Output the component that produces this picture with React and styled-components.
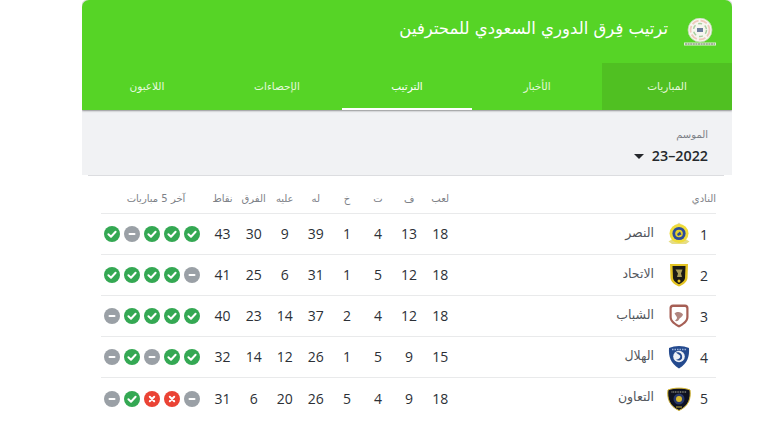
import React from "react";
import styled, { createGlobalStyle } from "styled-components";

const Global = createGlobalStyle`
  html, body { margin: 0; padding: 0; background: #fff; height: 427px; overflow: hidden; }
  body { font-family: "Open Sans", "DejaVu Sans", sans-serif; }
`;
const Page = styled.div`
  width: 650px; margin-left: 82px; height: 427px; overflow: hidden;
`;
const Card = styled.div`
  direction: rtl; height: 440px; box-sizing: border-box;
  border-radius: 7px 7px 0 0; box-shadow: 0 0 0 1px #e2e3e5; background: #fff;
`;
const Green = styled.header`
  background: #56d426; border-radius: 7px 7px 0 0; box-shadow: 0 1px 2px rgba(0,0,0,.4); position: relative;
`;
const TitleBar = styled.div`
  height: 63px; display: flex; align-items: center; gap: 16px; padding-right: 16px; box-sizing: border-box;
`;
const Title = styled.h1`
  margin: 0; font-size: 16.5px; font-weight: 400; color: #fff; line-height: 1;
  font-family: "DejaVu Sans", sans-serif; letter-spacing: -0.82px; position: relative; top: -2px;
`;
const Tabs = styled.nav`display: flex;`;
const Tab = styled.div`
  width: 130px; height: 47px; display: flex; align-items: center; justify-content: center; box-sizing: border-box;
  padding-top: 1px; font-size: 10.5px; letter-spacing: -0.4px; font-family: "DejaVu Sans", sans-serif;
  color: ${p => (p.$active ? "#fff" : "#e6f9de")};
  background: ${p => (p.$selected ? "#50c022" : "transparent")};
  border-bottom: 2px solid ${p => (p.$active ? "#fff" : "transparent")};
`;
const Season = styled.section`
  background: #f1f2f4; height: 65px; padding: 18px 24px 0 0; box-sizing: border-box;
`;
const SeasonLabel = styled.div`
  font-family: "DejaVu Sans", sans-serif; font-size: 10px; letter-spacing: -0.35px; color: #7d8187; line-height: 13px;
`;
const SeasonValue = styled.div`
  display: flex; align-items: center; gap: 8px; margin-top: 5px; color: #25282c; font-size: 14.3px; font-weight: 600; line-height: 20px;
`;
const Caret = styled.span`
  width: 0; height: 0; border-left: 5px solid transparent; border-right: 5px solid transparent; border-top: 5px solid #25282c;
`;
const Table = styled.div`
  margin: 0 16px 0 19px; position: relative;
`;
const Rule = styled.div`
  height: 1px; background: #dcdde0; margin: 0 8px 0 6px;
`;
const Row = styled.div`
  display: grid; grid-template-columns: 1fr repeat(8, 31.1px) 106px; align-items: center;
  height: ${p => (p.$head ? 38 : 41)}px; box-sizing: border-box;
  border-bottom: ${p => (p.$last ? "0" : "1px solid #e9eaeb")};
`;
const Head = styled.div`
  font-family: "DejaVu Sans", sans-serif; font-size: 10px; letter-spacing: -0.3px; color: #7d8187; text-align: center; padding-top: 7px;
  white-space: nowrap;
`;
const Num = styled.div`
  font-size: 14px; color: #2c3036; text-align: center; padding-bottom: 1px;
`;
const Team = styled.div`
  display: flex; align-items: center; padding-right: 4px;
`;
const Rank = styled.span`
  width: 16px; text-align: center; font-size: 14px; color: #2c3036;
`;
const LogoBox = styled.span`
  width: 24px; height: 24px; margin-right: 5px; display: flex; align-items: center; justify-content: center;
`;
const Name = styled.span`
  margin-right: 13px; font-family: "DejaVu Sans", sans-serif; font-size: 12.5px; letter-spacing: -0.55px; color: #53575d; position: relative; top: -2px;
`;
const Dots = styled.div`
  display: flex; gap: 4px; padding-right: 7px;
`;
const DotShell = styled.span`
  width: 16px; height: 16px; border-radius: 50%; display: flex; align-items: center; justify-content: center;
  background: ${p => ({ w: "#34a853", d: "#9aa0a6", l: "#ea4335" }[p.$r])};
`;
const Dot = ({ r }) => (
  <DotShell $r={r}>
    <svg width="16" height="16" viewBox="0 0 16 16" fill="none" stroke="#fff" strokeWidth="2" strokeLinecap="round" strokeLinejoin="round">
      {r === "w" && <path d="M4.4 8.3 7 10.7 11.6 5.8" />}
      {r === "d" && <path d="M5.5 8h5" />}
      {r === "l" && <path d="M5.8 5.8l4.4 4.4M10.2 5.8l-4.4 4.4" />}
    </svg>
  </DotShell>
);

const LeagueLogo = () => (
  <svg width="32" height="28" viewBox="0 0 32 28">
    <circle cx="16" cy="12" r="12" fill="#f7f6f0" stroke="#b9d8a8" strokeWidth=".8" />
    <circle cx="16" cy="12" r="9.500" fill="none" stroke="#efc9bc" strokeWidth="1.800" strokeDasharray="7 2" />
    <circle cx="16" cy="12" r="6.500" fill="none" stroke="#a9cfa0" strokeWidth="1.500" strokeDasharray="4 3" />
    <rect x="13" y="10" width="6" height="4" fill="#6c7c9c" />
    <path d="M0 26h32" stroke="#dff0d4" strokeWidth="3" />
    <path d="M1 26h30" stroke="#5b6a55" strokeWidth=".9" strokeDasharray="2 .6" />
  </svg>
);
const logos = {
  nassr: (
    <svg width="24" height="24" viewBox="0 0 24 24">
      <path d="M12 .5l4 3.500H8z" fill="#dfd9a8" />
      <path d="M1.500 19.500l4-2.500h13l4 2.500-3.500 2.500H5z" fill="#e6dd84" />
      <circle cx="12" cy="11.500" r="9.500" fill="#efdc3c" />
      <circle cx="12" cy="11.500" r="6.600" fill="#2b4b9b" />
      <circle cx="12" cy="11.500" r="3.800" fill="#e4cf2c" />
      <path d="M10 12l3-2.500 1.500 3-3.500 1.500z" fill="#2b4b9b" />
    </svg>
  ),
  ittihad: (
    <svg width="20" height="24" viewBox="0 0 20 24">
      <path d="M1 1h18l-.5 14c-.2 4-5.500 7.500-8.500 8.500-3-1-8.300-4.500-8.500-8.500z" fill="#e3c322" />
      <path d="M3.500 3h13l-.5 12c-.2 2.800-3.700 5.200-6 6.200-2.300-1-5.800-3.400-6-6.200z" fill="#1b1a15" />
      <path d="M6.500 6.500h7l-1.500 4 1 3.500H8l1-3.500z" fill="#a99d5a" />
      <circle cx="10" cy="18" r="1.500" fill="#e3c322" />
    </svg>
  ),
  shabab: (
    <svg width="20" height="24" viewBox="0 0 20 24">
      <path d="M4 .5h12c2.200 0 3.500 1.300 3.500 3.500v9c0 5-5.500 8.500-9.500 10.500C6 21.500.5 18 .5 13V4C.5 1.800 1.800.5 4 .5z" fill="#a65f55" />
      <path d="M4.500 3h11c1.200 0 1.800.6 1.800 1.800V13c0 3.800-4.200 6.500-7.300 8-3.100-1.500-7.300-4.200-7.300-8V4.800C2.700 3.600 3.300 3 4.500 3z" fill="#fff" />
      <path d="M5.500 9.500c3-2.500 7-1.500 8.500 1-1 3-3 3-4 5s-3 2-4 1c2-1 2.500-3 1.500-4z" fill="#b08680" />
    </svg>
  ),
  hilal: (
    <svg width="22" height="24" viewBox="0 0 22 24">
      <path d="M1 3c6-2.800 14-2.800 20 0 .6 8-1.500 15.500-10 20.500C2.500 18.500.4 11 1 3z" fill="#244a8e" />
      <circle cx="11" cy="11.500" r="5.800" fill="#eef1f6" />
      <path d="M8 7.500c4-1 7 2 6 6-1 2-4 3-6 1 3 0 5-2 4-4-1-1-3-2-4-3z" fill="#244a8e" />
      <path d="M4 4.500h14" stroke="#9cb3d8" strokeWidth="1.500" strokeDasharray="1.500 1" />
    </svg>
  ),
  taawoun: (
    <svg width="24" height="24" viewBox="0 0 24 24">
      <path d="M1 3c6-2.500 16-2.500 22 0 1 8-1 16-11 20.500C2 19 0 11 1 3z" fill="#0e1120" stroke="#d2b32c" strokeWidth="1" />
      <circle cx="12" cy="12" r="5.500" fill="#28386a" />
      <circle cx="12" cy="12" r="3" fill="#d8b92e" />
      <path d="M4.500 5h15" stroke="#c0c0a8" strokeWidth="1.200" strokeDasharray="1 .7" />
      <path d="M9 20h6" stroke="#c9b23a" strokeWidth="1" />
    </svg>
  ),
};

const teams = [
  { n: "1", name: "النصر", logo: "nassr", s: [18, 13, 4, 1, 39, 9, 30, 43], f: "wwwdw" },
  { n: "2", name: "الاتحاد", logo: "ittihad", s: [18, 12, 5, 1, 31, 6, 25, 41], f: "dwwww" },
  { n: "3", name: "الشباب", logo: "shabab", s: [18, 12, 4, 2, 37, 14, 23, 40], f: "wwwwd" },
  { n: "4", name: "الهلال", logo: "hilal", s: [15, 9, 5, 1, 26, 12, 14, 32], f: "wwdwd" },
  { n: "5", name: "التعاون", logo: "taawoun", s: [18, 9, 4, 5, 26, 20, 6, 31], f: "dllwd" },
];
const heads = ["لعب", "ف", "ت", "خ", "له", "عليه", "الفرق", "نقاط"];
const tabs = ["المباريات", "الأخبار", "الترتيب", "الإحصاءات", "اللاعبون"];

const TeamHead = styled(Head)`text-align: right;`;
const FormHead = styled(Head)`position: relative; left: 2px;`;

export default function App() {
  return (
    <Page>
      <Global />
      <Card>
        <Green>
          <TitleBar>
            <LeagueLogo />
            <Title>ترتيب فِرق الدوري السعودي للمحترفين</Title>
          </TitleBar>
          <Tabs>
            {tabs.map((t, i) => (
              <Tab key={t} $selected={i === 0} $active={i === 2}>{t}</Tab>
            ))}
          </Tabs>
        </Green>
        <Season>
          <SeasonLabel>الموسم</SeasonLabel>
          <SeasonValue>2022–23<Caret /></SeasonValue>
        </Season>
        <Rule />
        <Table>
          <Row $head>
            <TeamHead>النادي</TeamHead>
            {heads.map(h => <Head key={h}>{h}</Head>)}
            <FormHead>آخر 5 مباريات</FormHead>
          </Row>
          {teams.map((t, i) => (
            <Row key={t.n} $last={i === 4}>
              <Team>
                <Rank>{t.n}</Rank>
                <LogoBox>{logos[t.logo]}</LogoBox>
                <Name>{t.name}</Name>
              </Team>
              {t.s.map((v, j) => <Num key={j}>{v}</Num>)}
              <Dots>{t.f.split("").map((r, j) => <Dot key={j} r={r} />)}</Dots>
            </Row>
          ))}
        </Table>
      </Card>
    </Page>
  );
}
